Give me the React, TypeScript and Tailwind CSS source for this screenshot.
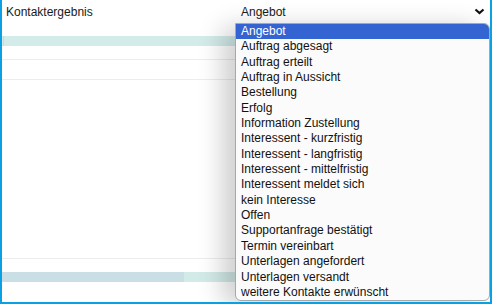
const OPTIONS = [
  'Angebot',
  'Auftrag abgesagt',
  'Auftrag erteilt',
  'Auftrag in Aussicht',
  'Bestellung',
  'Erfolg',
  'Information Zustellung',
  'Interessent - kurzfristig',
  'Interessent - langfristig',
  'Interessent - mittelfristig',
  'Interessent meldet sich',
  'kein Interesse',
  'Offen',
  'Supportanfrage bestätigt',
  'Termin vereinbart',
  'Unterlagen angefordert',
  'Unterlagen versandt',
  'weitere Kontakte erwünscht',
];

export default function App() {
  const selected = 'Angebot';

  return (
    <div
      className="relative w-[492px] h-[304px] overflow-hidden bg-white border-l-2 border-r-2 border-b-2 border-[#0aa0e2] text-[12px] text-[#1a1a1a]"
      style={{ fontFamily: '"Liberation Sans", Arial, sans-serif' }}
    >
      {/* Header row */}
      <div className="flex items-center h-[23px]">
        <div className="w-[234px] pl-[4px]">Kontaktergebnis</div>
        <div className="flex-1 flex items-center justify-between pl-[5px] pr-[5px]">
          <span>{selected}</span>
          <svg width="11" height="7" viewBox="0 0 11 7">
            <polyline points="1.5,1.5 5.5,5 9.5,1.5" fill="none" stroke="#111" strokeWidth="2.2" />
          </svg>
        </div>
      </div>

      {/* Background table rows */}
      <div className="h-[13px]" />
      <div className="h-[10px] bg-[#d3ebe9] flex">
        <div className="w-[1px] ml-[1px] bg-[#c3dcdc]" />
      </div>
      <div className="h-[14px] border-b border-[#ececec]" />
      <div className="h-[20px] border-b border-[#ececec]" />
      <div className="h-[179px] border-b border-[#ececec]" />
      <div className="h-[13px]" />
      <div className="h-[10px] flex">
        <div className="w-[182px] bg-[#c9dfe5]" />
        <div className="flex-1 bg-[#d3ebe8]" />
      </div>

      {/* Open dropdown list */}
      <div className="absolute left-[233px] top-[23px] w-[255px] h-[278px] bg-[#fbfbfb] border border-[#a8a8a8] rounded-tr-[6px] rounded-b-[6px] overflow-hidden shadow-[-12px_4px_26px_rgba(0,0,0,0.2)]">
        {OPTIONS.map((opt) => (
          <div
            key={opt}
            className={`h-[15.35px] leading-[15.35px] pl-[5px] whitespace-nowrap ${
              opt === selected ? 'bg-[#3463d2] text-white' : 'text-[#111]'
            }`}
          >
            {opt}
          </div>
        ))}
      </div>
    </div>
  );
}
